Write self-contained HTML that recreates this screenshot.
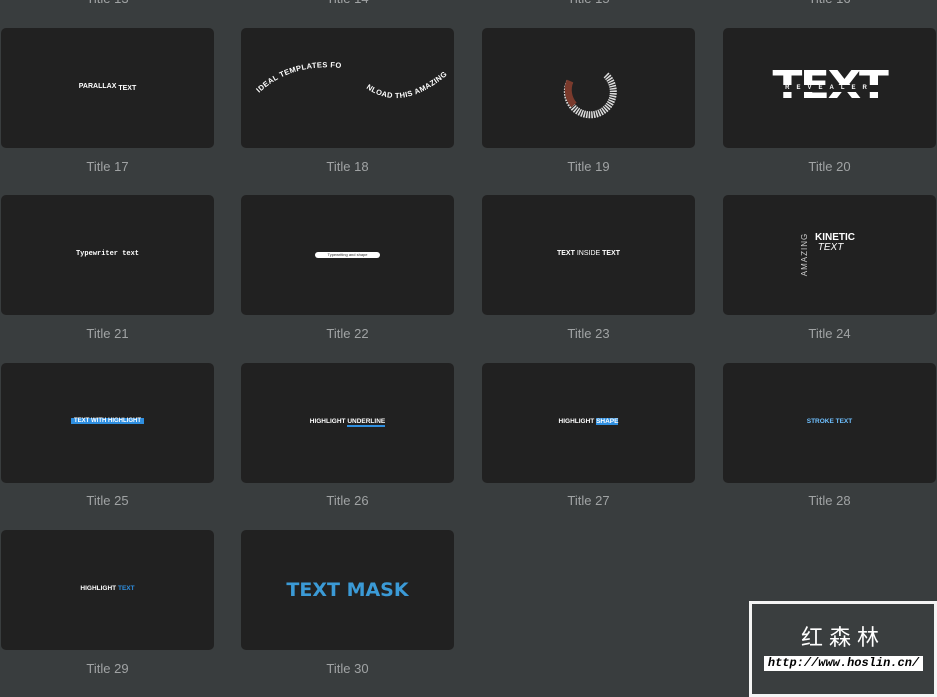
<!DOCTYPE html>
<html><head><meta charset="utf-8"><style>
body{margin:0;width:937px;height:694px;background:#393d3e;overflow:hidden;position:relative;font-family:"Liberation Sans",sans-serif}
.c{position:absolute;width:213px;height:120px;background:#212121;border-radius:5px;overflow:hidden}
.l{position:absolute;width:213px;text-align:center;color:#a0a3a4;font-size:13px}
.t{position:absolute;left:0;right:0;text-align:center;font-weight:bold;color:#fff;white-space:nowrap}
</style></head><body>
<div class="l" style="left:1px;top:-9px">Title 13</div>
<div class="l" style="left:241px;top:-9px">Title 14</div>
<div class="l" style="left:482px;top:-9px">Title 15</div>
<div class="l" style="left:723px;top:-9px">Title 16</div>

<div class="c" style="left:1px;top:28px"><div class="t" style="top:55px;font-size:7px">PARALLAX <span style="position:relative;top:2px">TEXT</span></div></div>
<div class="c" style="left:241px;top:28px">
<svg width="213" height="120"><path id="a" d="M18,65 Q50,35 100,40" fill="none"/><path id="b" d="M125,60 Q160,85 205,48" fill="none"/>
<text font-size="7.5" fill="#fff" font-weight="bold" letter-spacing="0.4" font-family="Liberation Sans Narrow,Liberation Sans"><textPath href="#a">IDEAL TEMPLATES FOR YOU.</textPath></text>
<text font-size="7.5" fill="#fff" font-weight="bold" letter-spacing="0.4" font-family="Liberation Sans Narrow,Liberation Sans"><textPath href="#b">NLOAD THIS AMAZING PACK</textPath></text></svg></div>
<div class="c" style="left:482px;top:28px"><svg width="213" height="120"><path d="M124,47 A23,23 0 1 1 88,53" fill="none" stroke="#ddd" stroke-width="7" stroke-dasharray="1.5 1"/><path d="M88,53 A23,23 0 0 0 92,77" fill="none" stroke="#7a3a2c" stroke-width="7"/></svg></div>
<div class="c" style="left:723px;top:28px"><div class="t" style="top:40px;font-size:38px;font-family:'DejaVu Sans',sans-serif;line-height:34px;transform:scaleX(1.15);letter-spacing:-2px">TEXT</div><div class="t" style="top:57px;font-size:6px;letter-spacing:7px;color:#fff;background:#212121;width:104px;margin:auto;height:7px;line-height:7px">REVEALER</div></div>
<div class="l" style="left:1px;top:159px">Title 17</div>
<div class="l" style="left:241px;top:159px">Title 18</div>
<div class="l" style="left:482px;top:159px">Title 19</div>
<div class="l" style="left:723px;top:159px">Title 20</div>

<div class="c" style="left:1px;top:195px"><div class="t" style="top:55px;font-size:7px;font-family:'Liberation Mono',monospace">Typewriter text</div></div>
<div class="c" style="left:241px;top:195px"><div style="position:absolute;left:74px;top:57px;width:65px;height:6px;background:#fff;border-radius:3px;font-size:4px;color:#333;line-height:6px;text-align:center">Typewriting and shape</div></div>
<div class="c" style="left:482px;top:195px"><div class="t" style="top:55px;font-size:7px">TEXT <span style="font-weight:normal">INSIDE</span> TEXT</div></div>
<div class="c" style="left:723px;top:195px"><div style="position:absolute;left:92px;top:38px;color:#fff;font-weight:bold;font-size:10px;line-height:10px">KINETIC<br><i style="font-weight:normal">&nbsp;TEXT</i></div><div style="position:absolute;left:60px;top:55px;transform:rotate(-90deg);color:#ccc;font-size:8px;letter-spacing:1px">AMAZING</div></div>
<div class="l" style="left:1px;top:326px">Title 21</div>
<div class="l" style="left:241px;top:326px">Title 22</div>
<div class="l" style="left:482px;top:326px">Title 23</div>
<div class="l" style="left:723px;top:326px">Title 24</div>

<div class="c" style="left:1px;top:363px"><div class="t" style="top:55px;font-size:6px"><span style="background:#2f8fe0;padding:0 3px">TEXT WITH HIGHLIGHT</span></div></div>
<div class="c" style="left:241px;top:363px"><div class="t" style="top:55px;font-size:6.5px">HIGHLIGHT <span style="border-bottom:2px solid #2f8fe0">UNDERLINE</span></div></div>
<div class="c" style="left:482px;top:363px"><div class="t" style="top:55px;font-size:6.5px">HIGHLIGHT <span style="background:#2f8fe0">SHAPE</span></div></div>
<div class="c" style="left:723px;top:363px"><div class="t" style="top:55px;font-size:6.5px;color:#6fc0ff">STROKE TEXT</div></div>
<div class="l" style="left:1px;top:493px">Title 25</div>
<div class="l" style="left:241px;top:493px">Title 26</div>
<div class="l" style="left:482px;top:493px">Title 27</div>
<div class="l" style="left:723px;top:493px">Title 28</div>

<div class="c" style="left:1px;top:530px"><div class="t" style="top:55px;font-size:6.5px">HIGHLIGHT <span style="color:#2f8fe0">TEXT</span></div></div>
<div class="c" style="left:241px;top:530px"><div class="t" style="top:49px;font-size:19px;color:#3b9ad6;font-family:'DejaVu Sans',sans-serif">TEXT MASK</div></div>
<div class="l" style="left:1px;top:661px">Title 29</div>
<div class="l" style="left:241px;top:661px">Title 30</div>

<div style="position:absolute;left:749px;top:601px;width:182px;height:90px;border:3px solid #f4f4f4;background:#3a3e3f">
<div style="position:absolute;left:0;right:0;top:16px;text-align:center;color:#fff;font-size:22px;letter-spacing:6px;font-family:'Liberation Sans','Noto Sans CJK SC',sans-serif">红森林</div>
<div style="position:absolute;left:12px;top:52px;width:159px;height:15px;background:#fff;color:#000;font-size:12px;font-style:italic;font-weight:bold;line-height:15px;text-align:center;font-family:'Liberation Mono',monospace">http://www.hoslin.cn/</div>
</div>
</body></html>
